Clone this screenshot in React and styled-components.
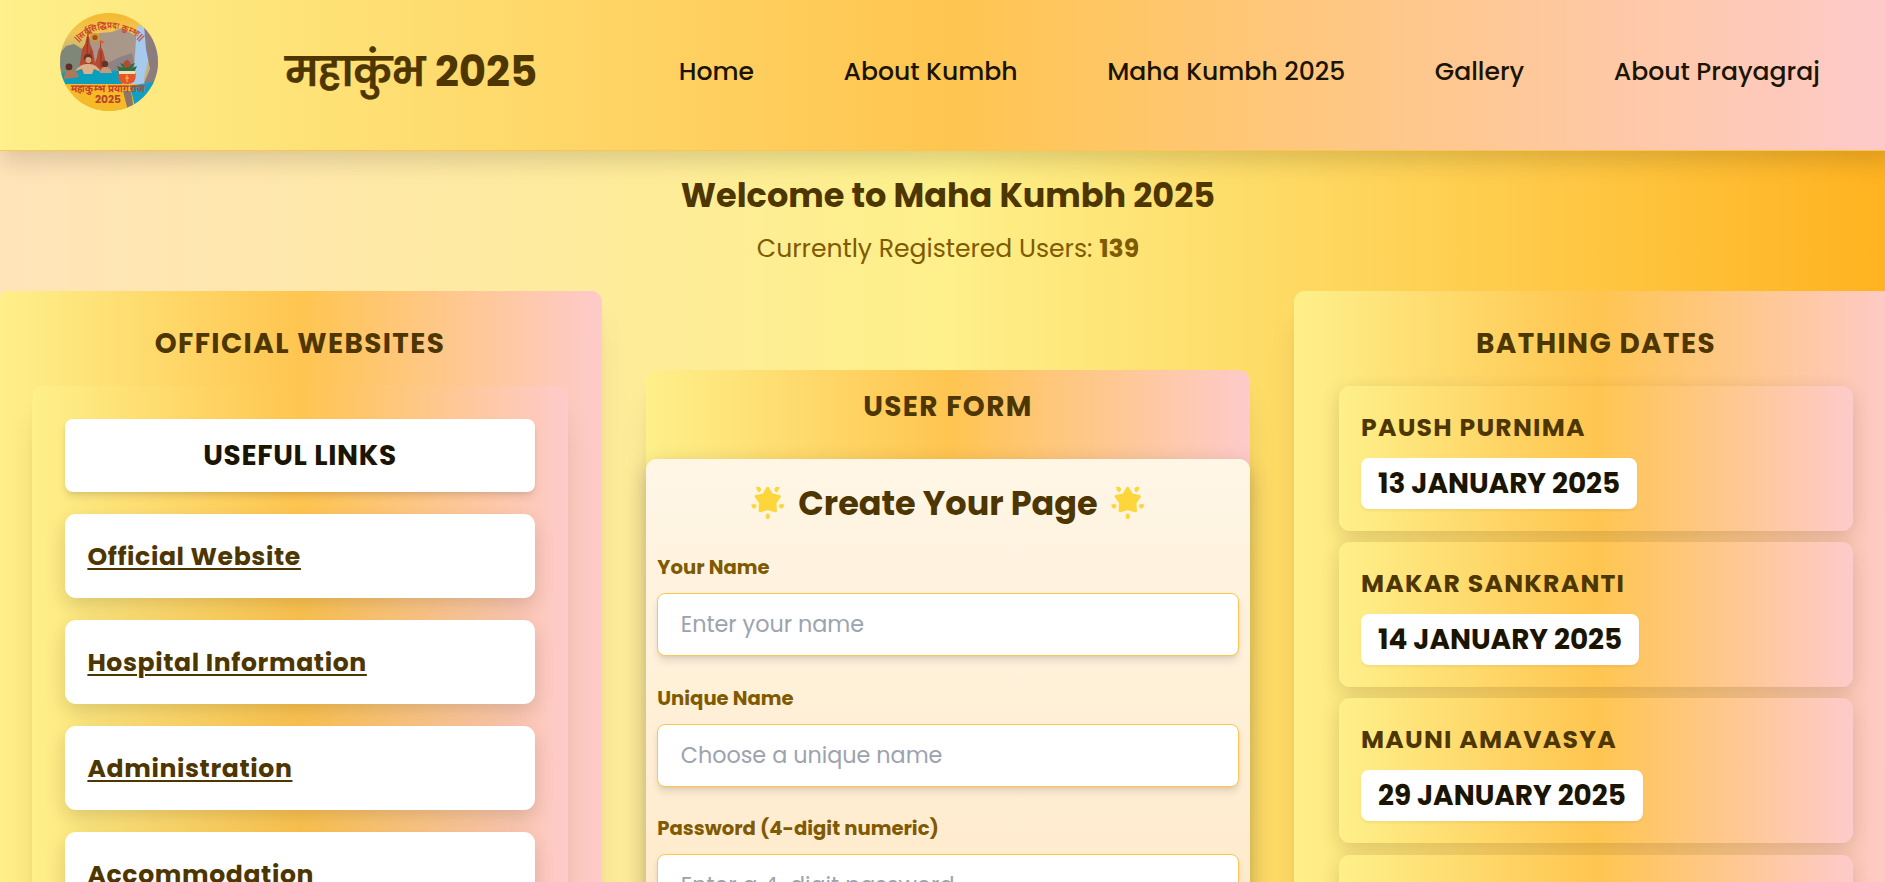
import React from 'react';
import styled, { createGlobalStyle } from 'styled-components';

const sunrise = 'linear-gradient(to right, #fef08a, #ffc550 50%, #fecaca)';
const shadowMd = '0 5.5px 8px -1.4px rgba(0,0,0,.1), 0 2.75px 5.5px -2.75px rgba(0,0,0,.1)';
const shadowXl = '0 27.5px 34px -7px rgba(0,0,0,.1), 0 11px 14px -8px rgba(0,0,0,.1)';
const shadowHeader = '0 13px 22px -2px rgba(0,0,0,.14)';
const shadowLink = '0 8px 20px rgba(0,0,0,.14)';
const shadowCard = '0 6px 20px rgba(0,0,0,.14)';

const GlobalStyle = createGlobalStyle`
  *, *::before, *::after { box-sizing: border-box; }
  html, body { margin: 0; height: 882px; overflow: hidden; }
  body { font-family: Poppins, Inter, "Noto Sans", sans-serif; color: #1a1400; }
`;

const Page = styled.div`
  width: 1896px;
  height: 882px;
  overflow: hidden;
  background: linear-gradient(to right, #ffe4ba, #fef08a 50%, #ffb21f);
`;

const Header = styled.header`
  display: flex;
  align-items: center;
  height: 151px;
  padding-left: 60px;
  background: ${sunrise};
  border-bottom: 1px solid #ffc550;
  box-shadow: ${shadowHeader};
`;

const Logo = styled.svg`
  width: 98px;
  height: 98px;
  margin-top: -26px;
  flex: none;
`;

const Brand = styled.h1`
  display: flex;
  flex: none;
  align-items: baseline;
  width: 393.7px;
  margin: 0 0 0 127px;
  padding-bottom: 6px;
  font-size: 41.9px;
  line-height: 60px;
  font-weight: 700;
  color: #4d3600;
`;

const Devanagari = styled.span`
  font-size: 41px;
  font-weight: 600;
  letter-spacing: -1.4px;
  margin-right: 11px;
  -webkit-text-stroke: 0.25px #4d3600;
`;

const Nav = styled.nav`
  display: flex;
  gap: 89.5px;
  padding-bottom: 6px;
`;

const NavLink = styled.a`
  font-size: 25.1px;
  line-height: 36px;
  font-weight: 500;
  white-space: nowrap;
`;

const Welcome = styled.section`
  display: flex;
  flex-direction: column;
  align-items: center;
  gap: 12.5px;
  height: 140px;
  padding-top: 22.5px;
`;

const WelcomeTitle = styled.h2`
  margin: 0;
  font-size: 33.5px;
  line-height: 44px;
  font-weight: 700;
  color: #4d3600;
`;

const UserCount = styled.p`
  margin: 0;
  font-size: 25.1px;
  line-height: 37px;
  color: #805a00;
`;

const Columns = styled.main`
  display: grid;
  grid-template-columns: repeat(3, 604px);
  gap: 44px;
  align-items: start;
  margin-left: -2px;
`;

const Panel = styled.section`
  min-height: 700px;
  padding: 33px ${(p) => p.$side}px;
  border-radius: 11px;
  background: ${sunrise};
  box-shadow: ${shadowXl};
`;

const FormPanel = styled(Panel)`
  margin-top: 79px;
  padding: 17px 0 0;
`;

const PanelTitle = styled.h3`
  margin: 0 0 ${(p) => p.$gap || 22}px;
  text-align: center;
  font-size: 27.9px;
  line-height: 40px;
  font-weight: 700;
  letter-spacing: 0.05em;
  color: #4d3600;
`;

const LinksBox = styled.div`
  display: flex;
  flex-direction: column;
  gap: 22px;
  padding: 33px;
  border-radius: 11px;
  background: ${sunrise};
  box-shadow: ${shadowXl};
`;

const LinksTitle = styled.h4`
  margin: 0;
  text-align: center;
  font-size: 27.9px;
  line-height: 73px;
  font-weight: 700;
  letter-spacing: 0.025em;
  border-radius: 8px;
  background: #fff;
  box-shadow: ${shadowMd};
`;

const LinkCard = styled.div`
  height: 84px;
  padding: 1px 0 0 22.4px;
  border-radius: 11px;
  background: #fff;
  box-shadow: ${shadowLink};
`;

const LinkText = styled.a`
  font-size: 25.1px;
  line-height: 83px;
  font-weight: 700;
  letter-spacing: 0.025em;
  color: #4d3600;
  text-decoration: underline;
  text-decoration-thickness: 2px;
  text-underline-offset: 2.5px;
`;

const Form = styled.form`
  min-height: 660px;
  padding: 23px 11.3px;
  border-radius: 11px;
  background: linear-gradient(to bottom, #fff6e6, #ffe5bf);
  box-shadow: 0 8px 22px rgba(0,0,0,.22);
`;

const FormTitle = styled.h2`
  display: flex;
  justify-content: center;
  align-items: center;
  gap: 13.6px;
  margin: 0 0 26px;
  font-size: 33.5px;
  line-height: 44px;
  font-weight: 700;
  color: #4d3600;
`;

const StarIcon = styled.svg`
  width: 33.5px;
  height: 33.5px;
  margin-top: -3px;
  fill: #fdd63b;
`;

const Field = styled.div`
  display: flex;
  flex-direction: column;
  gap: 11px;
  margin-bottom: 26.6px;
`;

const Label = styled.label`
  font-size: 19.6px;
  line-height: 30px;
  font-weight: 700;
  color: #805a00;
`;

const Input = styled.input`
  width: 100%;
  height: 63px;
  padding: 0 22.4px;
  border: 1px solid #ffc550;
  border-radius: 8px;
  background: #fff;
  box-shadow: ${shadowMd};
  font: inherit;
  font-size: 22.3px;
  &::placeholder { color: #9ca3af; opacity: 1; }
`;

const DateCard = styled.article`
  display: flex;
  flex-direction: column;
  align-items: flex-start;
  height: 145px;
  margin-bottom: 11.2px;
  padding: 22.7px 22px;
  border-radius: 11px;
  background: ${sunrise};
  box-shadow: ${shadowCard};
`;

const Festival = styled.h4`
  margin: 0 0 11.3px;
  font-size: 25.1px;
  line-height: 38px;
  font-weight: 700;
  letter-spacing: 0.05em;
  color: #4d3600;
`;

const DateBadge = styled.span`
  padding: 1px 17px 0;
  font-size: 27.9px;
  line-height: 49.7px;
  font-weight: 700;
  border-radius: 8px;
  background: #fff;
  box-shadow: 0 1.4px 3px rgba(0,0,0,.05);
`;

const navItems = ['Home', 'About Kumbh', 'Maha Kumbh 2025', 'Gallery', 'About Prayagraj'];

const links = ['Official Website', 'Hospital Information', 'Administration', 'Accommodation'];

const fields = [
  ['Your Name', 'Enter your name'],
  ['Unique Name', 'Choose a unique name'],
  ['Password (4-digit numeric)', 'Enter a 4-digit password'],
];

const dates = [
  ['PAUSH PURNIMA', '13 JANUARY 2025'],
  ['MAKAR SANKRANTI', '14 JANUARY 2025'],
  ['MAUNI AMAVASYA', '29 JANUARY 2025'],
];

function Star() {
  return (
    <StarIcon viewBox="0 0 34 34" aria-hidden="true">
      <path
        strokeLinejoin="round"
        stroke="#fdd63b"
        strokeWidth="3"
        d="M17 2.4 L21 9 L28.8 10.6 L24.4 16.8 L24.8 25.2 L17 22.8 L9.2 25.2 L9.6 16.8 L5.2 10.6 L13 9 Z"
      />
      <path d="M5.4 1 Q10 0 10.2 3.6 Q9.6 7 7.6 6 Q5 3.6 5.4 1Z M28.6 1 Q24 0 23.8 3.6 Q24.4 7 26.4 6 Q29 3.6 28.6 1Z M.3 18.8 Q4 17.6 5.6 19.4 Q6 22 3.6 23.2 Q.6 22.6 .3 18.8Z M33.7 18.8 Q30 17.6 28.4 19.4 Q28 22 30.4 23.2 Q33.4 22.6 33.7 18.8Z M17 27.6 Q19.4 28.4 19.3 31 Q18.8 33.6 17 33.8 Q15.2 33.6 14.7 31 Q14.6 28.4 17 27.6Z" />
    </StarIcon>
  );
}

function KumbhLogo() {
  return (
    <Logo viewBox="0 0 98 98" role="img" aria-label="Kumbh emblem">
      <defs>
        <clipPath id="disc"><circle cx="49" cy="49" r="49" /></clipPath>
        <path id="arc" d="M18 29 A40 34 0 0 1 82 29" />
        <linearGradient id="sky" x1="0" y1="0" x2="0" y2="1">
          <stop offset="0" stopColor="#f5b92c" />
          <stop offset=".2" stopColor="#f2c653" />
          <stop offset=".4" stopColor="#c9b27a" />
        </linearGradient>
      </defs>
      <g clipPath="url(#disc)">
        <rect width="98" height="98" fill="url(#sky)" />
        <path d="M0 40 L6 33 L14 31 L22 36 L30 34 L40 60 L0 66Z" fill="#7f8878" />
        <path d="M28 26 L40 20 L52 19 L62 15 L78 24 L76 58 L28 58Z" fill="#a99789" />
        <path d="M48 50 L60 44 L72 40 L77 62 L48 60Z" fill="#8e8285" />
        <path d="M77 12 L86 16 L90 40 L84 66 L90 98 L66 88 L74 56Z" fill="#a5caed" />
        <path d="M84 12 L98 26 L98 74 L84 70 L90 56 L86 36Z" fill="#8b7c80" />
        <path d="M18 60 L20 50 L22 36 L25 31 L28 18 L30 31 L33 38 L35 50 L37 44 L38 38 L40.5 33 L43 38 L45 46 L48 58 Z" fill="#b64b31" />
        <path d="M28 24 L26 56 M31 38 V54 M41 38 V54" stroke="#8e3524" strokeWidth="1" />
        <path d="M28 20 V17 M40.5 34 V28" stroke="#a8412a" strokeWidth="1" />
        <path d="M28 17 L33 20 L28 22Z M40.5 27 L45 29 L40.5 31Z" fill="#e75b2b" />
        <ellipse cx="35" cy="24.5" rx="5.5" ry="4.5" fill="#c4a03a" />
        <circle cx="35" cy="24.5" r="2.6" fill="#b5432c" />
        <path d="M0 62 Q6 57 12 60 Q18 56 26 58 Q36 54 44 60 Q56 55 62 60 V73 H0Z" fill="#0a9fbd" />
        <circle cx="28" cy="45" r="4.2" fill="#6b3526" />
        <circle cx="28.4" cy="47" r="3" fill="#d3a17a" />
        <path d="M15 58 Q21 50 28 51 Q36 50 41 59 L34 56 L32 61 H24 L22 56Z" fill="#dcb08a" />
        <circle cx="9" cy="54" r="3.4" fill="#5c2f25" />
        <path d="M4 66 Q4 57 11 57 Q18 58 19 64Z" fill="#b0785a" />
        <circle cx="45" cy="51" r="3.2" fill="#5c352b" />
        <path d="M40 60 Q41 53 46 54 Q51 55 52 60Z" fill="#c99a7a" />
        <path d="M60 60 L57 53 L63 55 L60 50 L66 52 L67 46 L69 52 L75 50 L72 55 L77 53 L74 60Z" fill="#2f6f43" />
        <circle cx="67" cy="51" r="3.6" fill="#b54b2d" />
        <path d="M58.5 60 H75.5 Q77 71 67 71 Q57 71 58.5 60Z" fill="#e4552b" />
        <path d="M59 58 H75 V61 H59Z" fill="#f3dfb6" />
        <path d="M67 62 V69 M65 65 H69" stroke="#f6c33b" strokeWidth="1" />
        <path d="M0 71 H98 V98 H0Z" fill="#f7ba27" />
        <path d="M70 73 L98 68 V98 H76Z" fill="#129fc4" />
        <path d="M63 78 L71 78 L74 98 H68Z" fill="#8b7669" />
        <text fontFamily="sans-serif" fontWeight="700" fontSize="8.5" fill="#c8472a">
          <textPath href="#arc" startOffset="0" textLength="70" lengthAdjust="spacingAndGlyphs">||सर्वसिद्धिप्रदः कुम्भः||</textPath>
        </text>
        <text x="11" y="79" fontFamily="sans-serif" fontWeight="700" fontSize="10" textLength="73" lengthAdjust="spacingAndGlyphs" fill="#c43d2b">महाकुम्भ प्रयागराज</text>
        <text x="35" y="89.5" fontWeight="700" fontSize="10" textLength="26" lengthAdjust="spacingAndGlyphs" fill="#b6452a">2025</text>
      </g>
    </Logo>
  );
}

export default function App() {
  return (
    <Page>
      <GlobalStyle />
      <Header>
        <KumbhLogo />
        <Brand><Devanagari>महाकुंभ</Devanagari>2025</Brand>
        <Nav>
          {navItems.map((name) => <NavLink key={name}>{name}</NavLink>)}
        </Nav>
      </Header>
      <Welcome>
        <WelcomeTitle>Welcome to Maha Kumbh 2025</WelcomeTitle>
        <UserCount>Currently Registered Users: <strong>139</strong></UserCount>
      </Welcome>
      <Columns>
        <Panel $side={34}>
          <PanelTitle>OFFICIAL WEBSITES</PanelTitle>
          <LinksBox>
            <LinksTitle>USEFUL LINKS</LinksTitle>
            {links.map((name) => (
              <LinkCard key={name}><LinkText>{name}</LinkText></LinkCard>
            ))}
          </LinksBox>
        </Panel>
        <FormPanel>
          <PanelTitle $gap={32}>USER FORM</PanelTitle>
          <Form>
            <FormTitle><Star />Create Your Page<Star /></FormTitle>
            {fields.map(([label, hint]) => (
              <Field key={label}>
                <Label>{label}</Label>
                <Input placeholder={hint} />
              </Field>
            ))}
          </Form>
        </FormPanel>
        <Panel $side={45}>
          <PanelTitle>BATHING DATES</PanelTitle>
          {dates.map(([name, date]) => (
            <DateCard key={name}>
              <Festival>{name}</Festival>
              <DateBadge>{date}</DateBadge>
            </DateCard>
          ))}
          <DateCard />
        </Panel>
      </Columns>
    </Page>
  );
}
